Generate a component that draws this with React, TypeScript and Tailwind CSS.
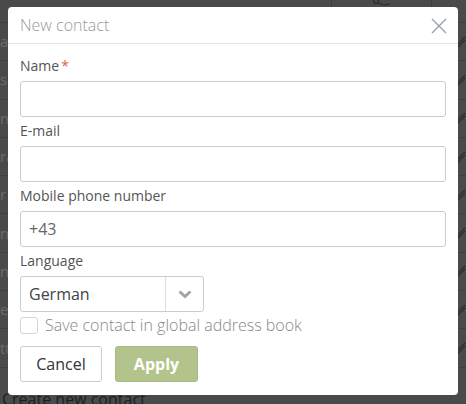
import React from "react";

const rowLabels = ["a", "s", "n", "ra", "r", "n.", "n.", "ei", "t0"];

function Hatch() {
  return (
    <svg width="10" height="14" viewBox="0 0 10 14" className="block">
      <path d="M1 10 L9 2 M1 13 L9 5" stroke="#2c2c2c" strokeWidth="1.3" fill="none" />
    </svg>
  );
}

function CloseIcon() {
  return (
    <svg width="16" height="16" viewBox="0 0 16 16" className="block">
      <path d="M1 1 L15 15 M15 1 L1 15" stroke="#8ea4ae" strokeWidth="1.4" fill="none" />
    </svg>
  );
}

function Chevron() {
  return (
    <svg width="14" height="9" viewBox="0 0 14 9" className="block">
      <path d="M1.5 1.5 L7 6.5 L12.5 1.5" stroke="#a3a3a3" strokeWidth="2.8" fill="none" />
    </svg>
  );
}

function Field({ label, required, value }: { label: string; required?: boolean; value?: string }) {
  return (
    <div className="flex flex-col">
      <div className="h-[20px] leading-[20px] text-[14px] text-[#555]">
        {label}
        {required && <span className="text-[#e0603a] ml-[2px]">*</span>}
      </div>
      <div className="mt-[5px] h-[36px] rounded-[3px] border border-[#cccccc] bg-white flex items-center px-[8px] text-[16px] text-[#666]">
        {value}
      </div>
    </div>
  );
}

export default function App() {
  return (
    <div
      className="relative w-[466px] h-[404px] overflow-hidden bg-[#4a4a4a]"
      style={{ fontFamily: '"Open Sans", "Noto Sans", sans-serif' }}
    >
      {/* page content behind the modal */}
      <div className="flex flex-col pt-[22px]">
        {rowLabels.map((t, i) => (
          <div key={i} className="h-[38.3px] border-t border-[#3f3f3f] flex items-center justify-between">
            <span className="text-[15px] text-[#6a6a6a] leading-none">{t}</span>
            <span className="opacity-90">
              <Hatch />
            </span>
          </div>
        ))}
        <div className="h-[38px] border-t border-[#3f3f3f]" />
      </div>
      <div className="absolute left-[2px] top-[391px] text-[16px] text-[#1e1e1e] leading-none">Create new contact</div>
      <div className="absolute left-[331px] top-0 h-[7px] border-l border-[#3c3c3c]" />
      <div className="absolute left-[431px] top-0 h-[7px] border-l border-[#3c3c3c]" />
      <svg className="absolute left-[372px] top-[-2px]" width="20" height="10" viewBox="0 0 20 10">
        <circle cx="4" cy="3" r="2.5" stroke="#2a2a2a" strokeWidth="1.2" fill="none" />
        <path d="M6 5 L12 7 L18 6" stroke="#2a2a2a" strokeWidth="1.2" fill="none" />
      </svg>

      {/* modal */}
      <div className="absolute left-[8px] top-[7px] w-[450px] h-[388px] bg-white rounded-[4px] flex flex-col">
        <div className="h-[37px] border-b border-[#e3e3e3] flex items-center justify-between px-[12px]">
          <span className="text-[16px] font-light text-[#9a9a9a] leading-none">New contact</span>
          <span className="mr-[-1px] mt-[1px]">
            <CloseIcon />
          </span>
        </div>
        <div className="flex flex-col px-[12px] pt-[12px]">
          <Field label="Name" required />
          <div className="mt-[4px]">
            <Field label="E-mail" />
          </div>
          <div className="mt-[4px]">
            <Field label="Mobile phone number" value="+43" />
          </div>
          <div className="mt-[4px] flex flex-col">
            <div className="h-[20px] leading-[20px] text-[14px] text-[#555]">Language</div>
            <div className="mt-[5px] h-[36px] w-[184px] rounded-[3px] border border-[#cccccc] flex">
              <div className="flex-1 flex items-center px-[8px] text-[16px] text-[#444]">German</div>
              <div className="w-[38px] border-l border-[#dddddd] flex items-center justify-center">
                <Chevron />
              </div>
            </div>
          </div>
          <div className="mt-[4px] flex items-center h-[18px]">
            <div className="w-[18px] h-[17px] rounded-[3px] border border-[#d6d6d6] bg-white" />
            <span className="ml-[7px] text-[16px] font-light text-[#888] leading-none">
              Save contact in global address book
            </span>
          </div>
          <div className="mt-[12px] flex gap-[13px]">
            <div className="w-[82px] h-[36px] rounded-[3px] border border-[#cccccc] flex items-center justify-center text-[16px] text-[#333]">
              Cancel
            </div>
            <div className="w-[83px] h-[36px] rounded-[3px] bg-[#b3c38c] border border-[#a9b983] flex items-center justify-center text-[16px] font-bold text-white">
              Apply
            </div>
          </div>
        </div>
      </div>
    </div>
  );
}
